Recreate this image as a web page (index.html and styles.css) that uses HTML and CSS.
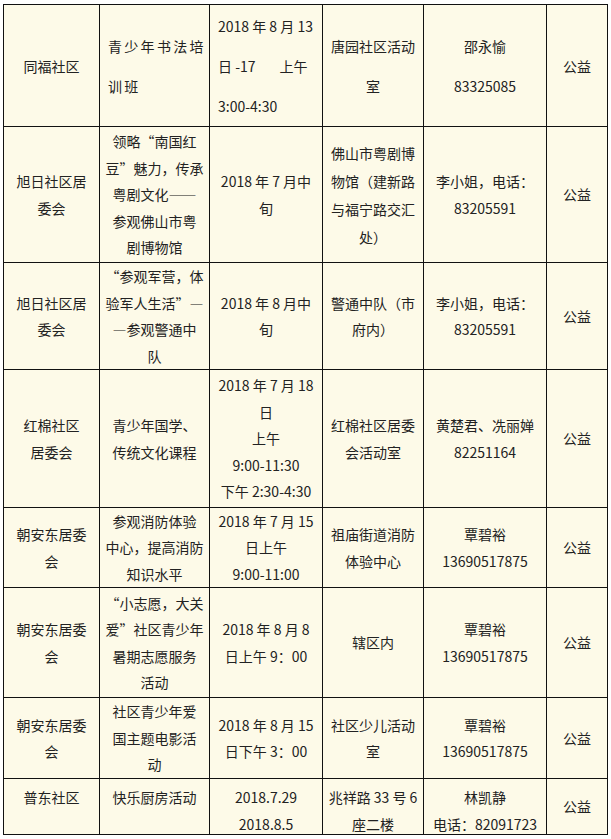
FILE: index.html
```html
<!DOCTYPE html>
<html lang="zh-CN">
<head>
<meta charset="utf-8">
<title>社区活动安排</title>
<link rel="stylesheet" href="styles.css">
</head>
<body>
<div class="sheet">
  <div class="cell r1"><div class="txt">同福社区</div></div>
  <div class="cell r1 left spaced"><div class="txt">青少年书法培<br>训班</div></div>
  <div class="cell r1 left"><div class="txt">2018 年 8 月 13<br>日 -17<span class="gap">上午</span><br>3:00-4:30</div></div>
  <div class="cell r1"><div class="txt">唐园社区活动<br>室</div></div>
  <div class="cell r1"><div class="txt">邵永愉<br>83325085</div></div>
  <div class="cell r1"><div class="txt">公益</div></div>

  <div class="cell"><div class="txt">旭日社区居<br>委会</div></div>
  <div class="cell"><div class="txt">领略“南国红<br>豆”魅力，传承<br>粤剧文化——<br>参观佛山市粤<br>剧博物馆</div></div>
  <div class="cell"><div class="txt">2018 年 7 月中<br>旬</div></div>
  <div class="cell tall"><div class="txt">佛山市粤剧博<br>物馆（建新路<br>与福宁路交汇<br>处）</div></div>
  <div class="cell"><div class="txt">李小姐，电话：<br>83205591</div></div>
  <div class="cell"><div class="txt">公益</div></div>

  <div class="cell"><div class="txt">旭日社区居<br>委会</div></div>
  <div class="cell"><div class="txt">“参观军营，体<br>验军人生活”—<br>—参观警通中<br>队</div></div>
  <div class="cell"><div class="txt">2018 年 8 月中<br>旬</div></div>
  <div class="cell"><div class="txt">警通中队（市<br>府内）</div></div>
  <div class="cell"><div class="txt">李小姐，电话：<br>83205591</div></div>
  <div class="cell"><div class="txt">公益</div></div>

  <div class="cell"><div class="txt">红棉社区<br>居委会</div></div>
  <div class="cell"><div class="txt">青少年国学、<br>传统文化课程</div></div>
  <div class="cell"><div class="txt">2018 年 7 月 18<br>日<br>上午<br>9:00-11:30<br>下午 2:30-4:30</div></div>
  <div class="cell"><div class="txt">红棉社区居委<br>会活动室</div></div>
  <div class="cell"><div class="txt">黄楚君、冼丽婵<br>82251164</div></div>
  <div class="cell"><div class="txt">公益</div></div>

  <div class="cell"><div class="txt">朝安东居委<br>会</div></div>
  <div class="cell"><div class="txt">参观消防体验<br>中心，提高消防<br>知识水平</div></div>
  <div class="cell"><div class="txt">2018 年 7 月 15<br>日上午<br>9:00-11:00</div></div>
  <div class="cell"><div class="txt">祖庙街道消防<br>体验中心</div></div>
  <div class="cell"><div class="txt">覃碧裕<br>13690517875</div></div>
  <div class="cell"><div class="txt">公益</div></div>

  <div class="cell"><div class="txt">朝安东居委<br>会</div></div>
  <div class="cell"><div class="txt">“小志愿，大关<br>爱”社区青少年<br>暑期志愿服务<br>活动</div></div>
  <div class="cell"><div class="txt">2018 年 8 月 8<br>日上午 9：00</div></div>
  <div class="cell"><div class="txt">辖区内</div></div>
  <div class="cell"><div class="txt">覃碧裕<br>13690517875</div></div>
  <div class="cell"><div class="txt">公益</div></div>

  <div class="cell"><div class="txt">朝安东居委<br>会</div></div>
  <div class="cell"><div class="txt">社区青少年爱<br>国主题电影活<br>动</div></div>
  <div class="cell"><div class="txt">2018 年 8 月 15<br>日下午 3：00</div></div>
  <div class="cell"><div class="txt">社区少儿活动<br>室</div></div>
  <div class="cell"><div class="txt">覃碧裕<br>13690517875</div></div>
  <div class="cell"><div class="txt">公益</div></div>

  <div class="cell top"><div class="txt">普东社区</div></div>
  <div class="cell top"><div class="txt">快乐厨房活动</div></div>
  <div class="cell top"><div class="txt">2018.7.29<br>2018.8.5</div></div>
  <div class="cell top"><div class="txt">兆祥路 33 号 6<br>座二楼</div></div>
  <div class="cell top"><div class="txt">林凯静<br>电话：82091723</div></div>
  <div class="cell"><div class="txt">公益</div></div>
</div>
</body>
</html>
```

FILE: styles.css
```css
html, body {
  margin: 0;
  padding: 0;
  background: #ffffff;
}

body {
  font-family: "Noto Sans CJK SC", "Noto Sans", sans-serif;
  font-size: 14px;
  color: #222222;
}

.sheet {
  display: grid;
  grid-template-columns: 96px 110px 113px 101px 123px 61px;
  grid-template-rows: 122px 136px 107px 138px 80px 110px 81px 56px;
  width: 604px;
  margin: 4px 0 0 3px;
  border-left: 1px solid #111111;
  border-top: 1px solid #111111;
  background: #fdfae8;
}

.cell {
  box-sizing: border-box;
  border-right: 1px solid #111111;
  border-bottom: 1px solid #111111;
  display: flex;
  align-items: center;
  justify-content: center;
  text-align: center;
  line-height: 26.5px;
  white-space: nowrap;
  overflow: hidden;
}

.r1 {
  line-height: 40px;
}

.left {
  justify-content: flex-start;
  text-align: left;
  padding-left: 8px;
}

.spaced {
  letter-spacing: 2.3px;
}

.gap {
  margin-left: 24px;
}

.tall {
  line-height: 28px;
}

.top {
  align-items: flex-start;
  padding-top: 5px;
}
```
